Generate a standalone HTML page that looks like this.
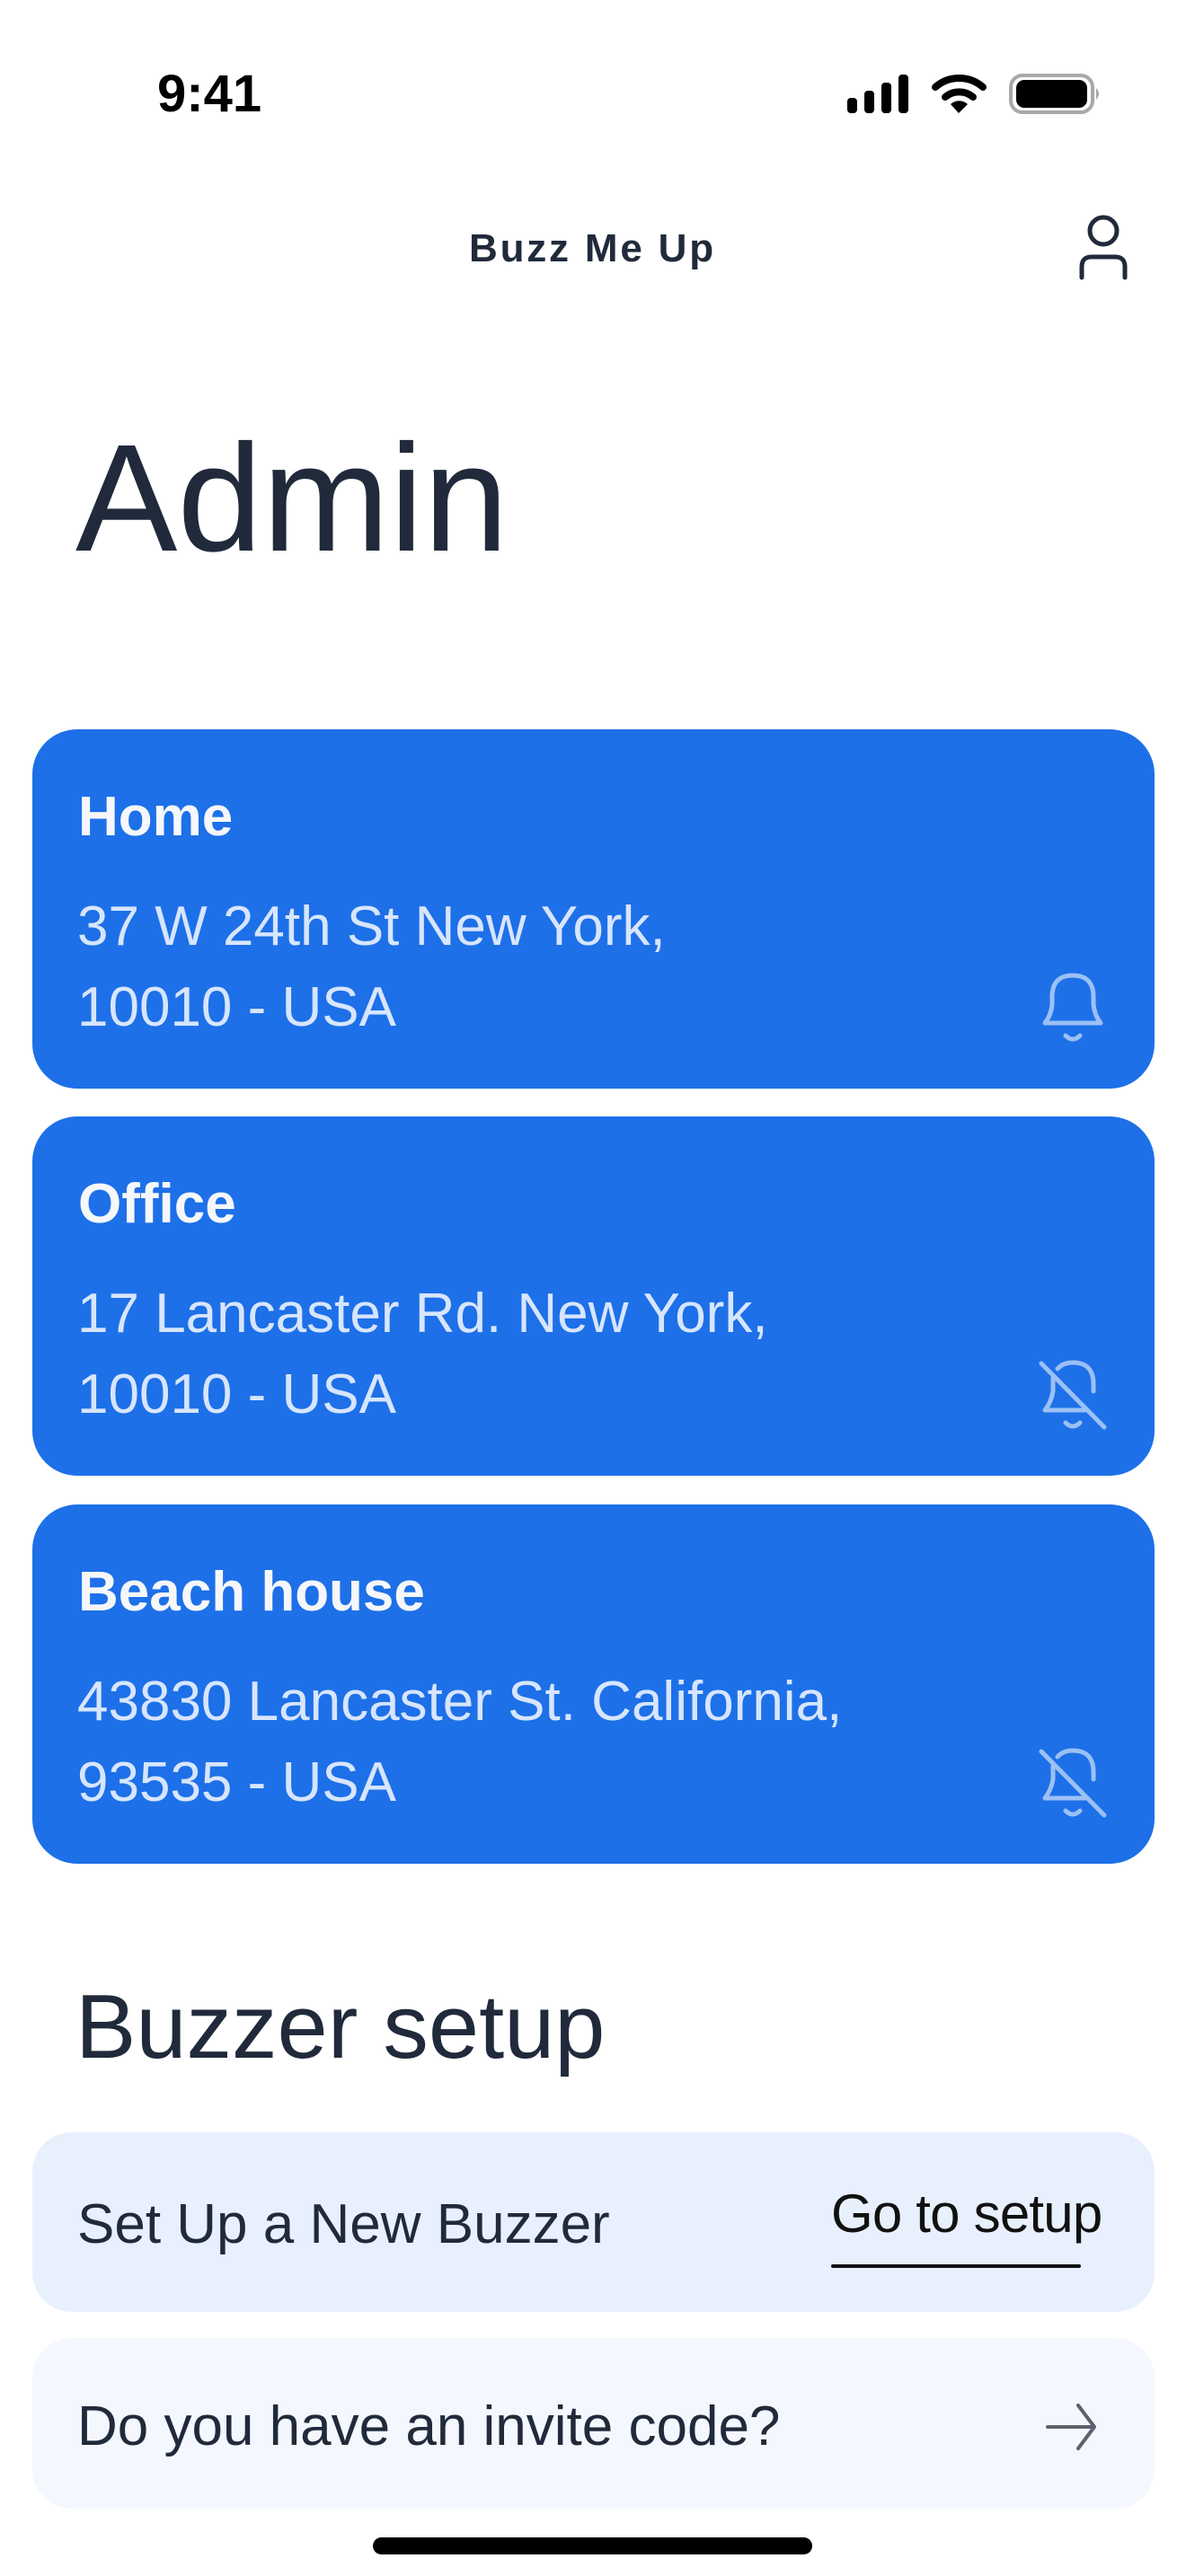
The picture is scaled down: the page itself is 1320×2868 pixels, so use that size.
<!DOCTYPE html>
<html><head><meta charset="utf-8"><style>
*{margin:0;padding:0;box-sizing:border-box}
html,body{width:1320px;height:2868px;background:#fff;overflow:hidden;font-family:"Liberation Sans",sans-serif;color:#212a3b}
.a{position:absolute;line-height:1;white-space:nowrap}
.card{position:absolute;left:36px;width:1249px;height:400px;background:#1d70e8;border-radius:50px}
.t{position:absolute;left:51px;font-size:62px;font-weight:bold;color:#f5f7fb;line-height:1;white-space:nowrap}
.ad{position:absolute;left:50px;font-size:62px;color:#d7e5fd;line-height:1;white-space:nowrap}
</style></head><body>
<div class="a" style="left:175px;top:76px;font-size:58px;font-weight:bold;color:#000">9:41</div>
<svg style="position:absolute;left:0;top:0" width="1320" height="140">
<rect x="943" y="109" width="11" height="17" rx="4" fill="#000"/>
<rect x="962" y="101" width="11" height="25" rx="4" fill="#000"/>
<rect x="981" y="92" width="11" height="34" rx="4" fill="#000"/>
<rect x="1000" y="83" width="11" height="43" rx="4" fill="#000"/>
<path d="M1041 97 A40 40 0 0 1 1094 97" stroke="#000" stroke-width="8" fill="none" stroke-linecap="round"/>
<path d="M1052 108 A24 24 0 0 1 1083 108" stroke="#000" stroke-width="8" fill="none" stroke-linecap="round"/>
<path d="M1058 116 L1067 126 L1077 116 A14 14 0 0 0 1058 116Z" fill="#000"/>
<rect x="1125" y="84" width="91" height="41" rx="13" fill="none" stroke="#a8a8a8" stroke-width="4"/>
<rect x="1131" y="89" width="79" height="31" rx="9" fill="#000"/>
<path d="M1220 98 Q1226 104 1220 111Z" fill="#a8a8a8"/>
</svg>
<div class="a" style="left:522px;top:255px;font-size:44px;font-weight:bold;letter-spacing:2.8px;color:#212a3b">Buzz Me Up</div>
<svg style="position:absolute;left:1195px;top:235px" width="70" height="80">
<circle cx="33" cy="22" r="15" fill="none" stroke="#212a3b" stroke-width="5"/>
<path d="M9 74 V62 Q9 51 20 51 H46 Q57 51 57 62 V74" fill="none" stroke="#212a3b" stroke-width="5" stroke-linecap="round"/>
</svg>
<div class="a" style="left:84px;top:470px;font-size:170px;color:#212a3b">Admin</div>

<div class="card" style="top:812px">
<div class="t" style="top:67px">Home</div>
<div class="ad" style="top:189px">37 W 24th St New York,</div>
<div class="ad" style="top:279px">10010 - USA</div>
</div>
<div class="card" style="top:1243px">
<div class="t" style="top:67px">Office</div>
<div class="ad" style="top:189px">17 Lancaster Rd. New York,</div>
<div class="ad" style="top:279px">10010 - USA</div>
</div>
<div class="card" style="top:1675px">
<div class="t" style="top:67px">Beach house</div>
<div class="ad" style="top:189px">43830 Lancaster St. California,</div>
<div class="ad" style="top:279px">93535 - USA</div>
</div>
<svg style="position:absolute;left:0;top:0" width="1320" height="2100">
<g fill="none" stroke="#9cc0f5" stroke-width="5" stroke-linecap="round" stroke-linejoin="round">
<path d="M1163 1139 H1225 Q1218 1130 1217 1118 V1110 Q1217 1086 1194 1086 Q1171 1086 1171 1110 V1118 Q1170 1130 1163 1139Z"/>
<path d="M1186 1153 Q1194 1161 1202 1153"/>
<g transform="translate(0,431)">
<path d="M1163 1139 H1208 M1217 1118 V1110 Q1217 1086 1194 1086 Q1183 1086 1177 1093 M1172 1103 V1118 Q1170 1130 1163 1139"/>
<path d="M1186 1153 Q1194 1161 1202 1153"/>
<path d="M1159 1087 L1229 1158"/>
</g>
<g transform="translate(0,863)">
<path d="M1163 1139 H1208 M1217 1118 V1110 Q1217 1086 1194 1086 Q1183 1086 1177 1093 M1172 1103 V1118 Q1170 1130 1163 1139"/>
<path d="M1186 1153 Q1194 1161 1202 1153"/>
<path d="M1159 1087 L1229 1158"/>
</g>
</g>
</svg>

<div class="a" style="left:84px;top:2207px;font-size:101px;color:#212a3b">Buzzer setup</div>
<div style="position:absolute;left:36px;top:2374px;width:1249px;height:200px;background:#e8f0fd;border-radius:44px"></div>
<div class="a" style="left:86px;top:2446px;font-size:62px;color:#212a3b">Set Up a New Buzzer</div>
<div class="a" style="left:925px;top:2435px;font-size:60px;color:#111;letter-spacing:-0.8px">Go to setup</div>
<div style="position:absolute;left:925px;top:2521px;width:278px;height:4px;background:#111;border-radius:2px"></div>
<div style="position:absolute;left:36px;top:2603px;width:1249px;height:190px;background:#f4f8fe;border-radius:44px"></div>
<div class="a" style="left:86px;top:2671px;font-size:62px;color:#212a3b">Do you have an invite code?</div>
<svg style="position:absolute;left:1160px;top:2670px" width="66" height="64">
<path d="M6 32 H58 M40 8 L58 32 L40 56" fill="none" stroke="#5b6270" stroke-width="4" stroke-linecap="round" stroke-linejoin="round"/>
</svg>
<div style="position:absolute;left:415px;top:2825px;width:489px;height:19px;background:#000;border-radius:10px"></div>
</body></html>
